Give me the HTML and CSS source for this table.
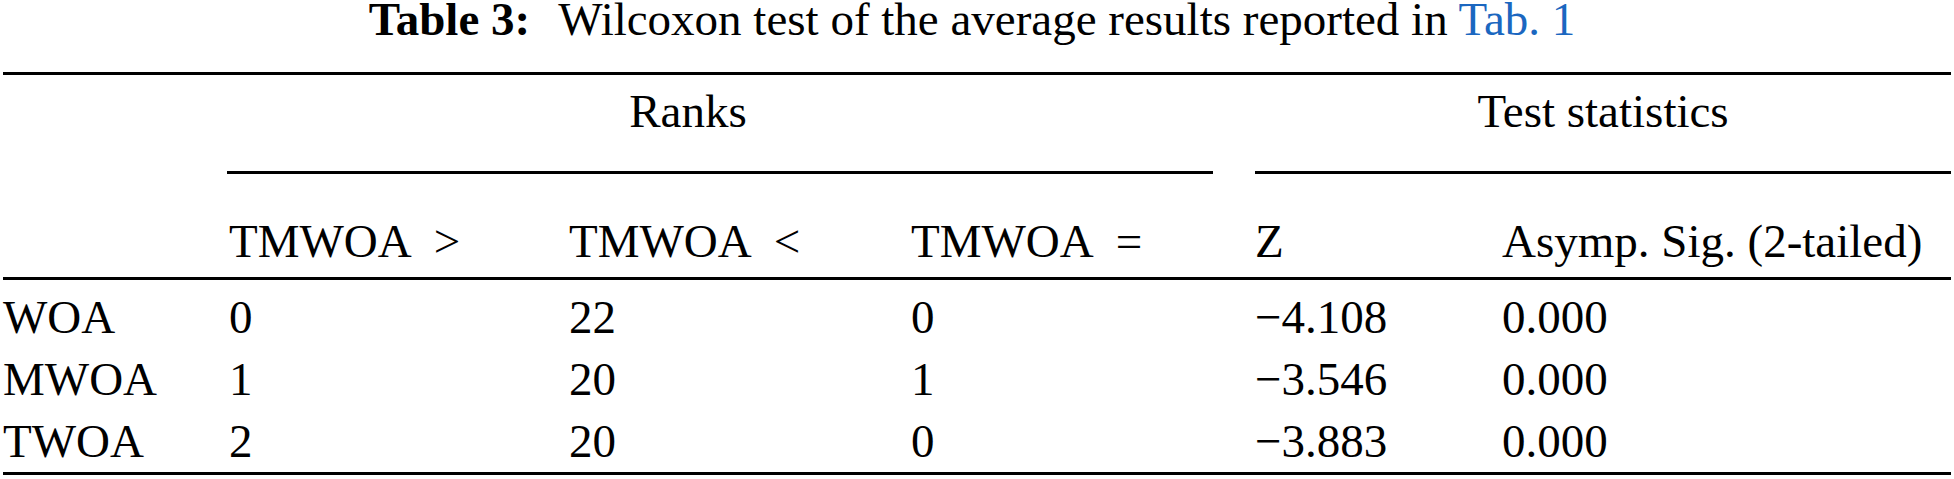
FILE: index.html
```html
<!DOCTYPE html>
<html lang="en">
<head>
<meta charset="utf-8">
<title>Table 3</title>
<link rel="stylesheet" href="styles.css">
</head>
<body>
<div class="page">
  <div class="caption"><span class="cap-label">Table 3:</span><span class="cap-text">Wilcoxon test of the average results reported in <a class="ref" href="#">Tab. 1</a></span></div>
  <table class="stats">
    <colgroup>
      <col class="c0"><col class="c1"><col class="c2"><col class="c3"><col class="c4"><col class="c5">
    </colgroup>
    <thead>
      <tr class="group-row">
        <th></th>
        <th colspan="3"><span class="group ranks">Ranks</span></th>
        <th colspan="2"><span class="group tests">Test statistics</span></th>
      </tr>
      <tr class="head-row">
        <th></th>
        <th>TMWOA<span class="rel">&gt;</span></th>
        <th>TMWOA<span class="rel">&lt;</span></th>
        <th>TMWOA<span class="rel">=</span></th>
        <th>Z</th>
        <th>Asymp. Sig. (2-tailed)</th>
      </tr>
    </thead>
    <tbody>
      <tr class="first">
        <td>WOA</td><td>0</td><td>22</td><td>0</td><td>−4.108</td><td>0.000</td>
      </tr>
      <tr>
        <td>MWOA</td><td>1</td><td>20</td><td>1</td><td>−3.546</td><td>0.000</td>
      </tr>
      <tr class="last">
        <td>TWOA</td><td>2</td><td>20</td><td>0</td><td>−3.883</td><td>0.000</td>
      </tr>
    </tbody>
  </table>
</div>
</body>
</html>
```
FILE: styles.css
```css
html, body {
  margin: 0;
  padding: 0;
  background: #ffffff;
}

body {
  font-family: "Liberation Serif", "Times New Roman", serif;
  color: #000000;
}

.page {
  width: 1954px;
}

.caption {
  font-size: 47px;
  line-height: 38px;
  height: 38px;
  margin-bottom: 34px;
  text-align: center;
  padding-right: 10px;
  white-space: nowrap;
}

.cap-label {
  font-weight: bold;
  margin-right: 28px;
}

.ref {
  color: #1b67c0;
  text-decoration: none;
}

.stats {
  margin-left: 3px;
  width: 1948px;
  table-layout: fixed;
  border-collapse: separate;
  border-spacing: 0;
  font-size: 47px;
}

.c0 { width: 226px; }
.c1 { width: 340px; }
.c2 { width: 342px; }
.c3 { width: 344px; }
.c4 { width: 247px; }
.c5 { width: 449px; }

.stats th,
.stats td {
  padding: 0;
  text-align: left;
  font-weight: normal;
  white-space: nowrap;
  vertical-align: top;
}

.rel {
  margin-left: 22px;
}

.group-row th {
  border-top: 3px solid #000;
  padding-top: 10px;
  line-height: 52px;
}

.group {
  display: block;
  padding-bottom: 34px;
  border-bottom: 3px solid #000;
  text-align: center;
}

.ranks {
  margin-left: -2px;
  margin-right: 42px;
  padding-right: 64px;
}

.tests {
  margin-right: 0;
}

.head-row th {
  padding-top: 41px;
  padding-bottom: 10px;
  line-height: 52px;
  border-bottom: 3px solid #000;
}

.stats td {
  line-height: 62px;
}

.stats tr.first td {
  padding-top: 6px;
}

.stats tr.last td {
  border-bottom: 3px solid #000;
}
```
